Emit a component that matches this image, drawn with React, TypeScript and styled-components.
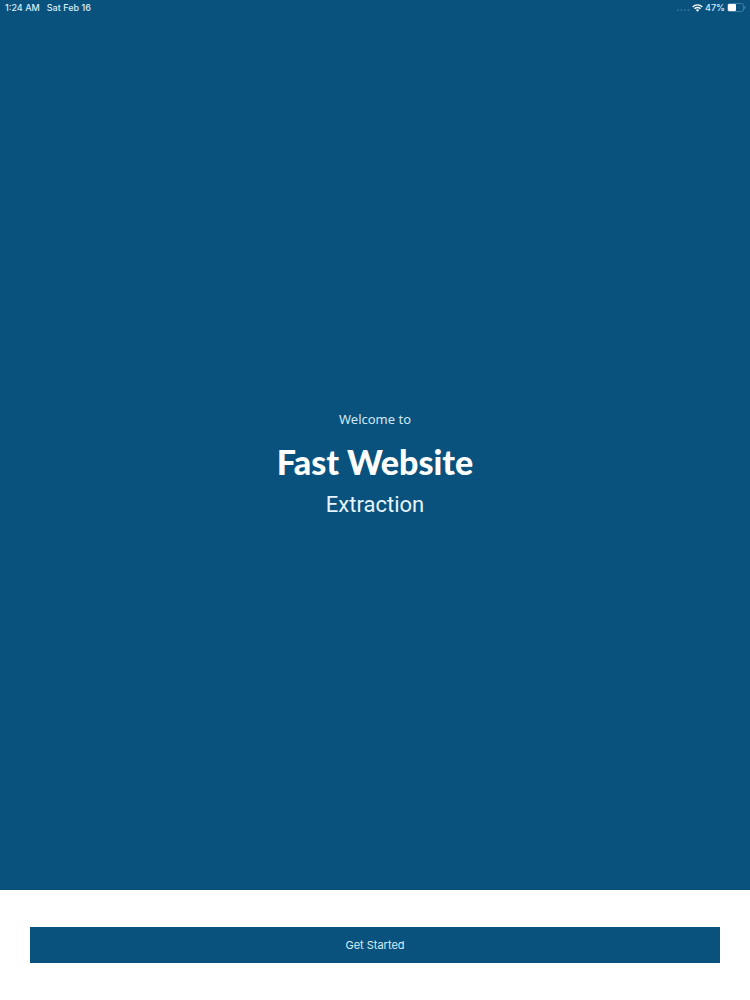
import React from "react";
import styled, { createGlobalStyle } from "styled-components";

const GlobalStyle = createGlobalStyle`
  *, *::before, *::after { box-sizing: border-box; }
  body { margin: 0; background: #ffffff; font-family: Inter, "Liberation Sans", sans-serif; }
`;

const Screen = styled.div`
  display: flex;
  flex-direction: column;
  min-height: 100vh;
`;

const Hero = styled.main`
  flex: 1;
  display: flex;
  flex-direction: column;
  background: #0a527e;
  color: #ffffff;
`;

const StatusBar = styled.header`
  display: flex;
  justify-content: space-between;
  align-items: center;
  height: 15px;
  padding: 0 4px 0 5px;
  font-size: 9px;
  line-height: 15px;
  font-weight: 500;
  color: #d9edf7;
`;

const StatusGroup = styled.div<{ $gap: number }>`
  display: flex;
  align-items: center;
  gap: ${({ $gap }) => $gap}px;
`;

const Welcome = styled.div`
  flex: 1;
  display: flex;
  flex-direction: column;
  align-items: center;
  justify-content: center;
  padding-top: 22px;
  text-align: center;
`;

const Greeting = styled.p`
  margin: 0;
  font-family: "Noto Sans", sans-serif;
  font-size: 13px;
  line-height: 20px;
  color: #cfe8f3;
`;

const Title = styled.h1`
  margin: 8px 0 4px;
  font-family: "Marker Felt", Lato, sans-serif;
  font-size: 34px;
  line-height: 50px;
  font-weight: 900;
`;

const Subtitle = styled.p`
  margin: 0;
  font-family: Roboto, sans-serif;
  font-size: 22px;
  line-height: 28px;
  color: #e6f4fb;
`;

const Footer = styled.footer`
  padding: 37px 30px;
`;

const StartButton = styled.button`
  display: block;
  width: 100%;
  height: 36px;
  padding: 0;
  border: 0;
  border-radius: 0;
  background: #0a527e;
  color: #d9edf7;
  font-family: inherit;
  font-size: 11px;
  line-height: 16px;
  cursor: pointer;
`;

const SignalDots = () => (
  <svg width="14" height="8" viewBox="0 0 14 8" fill="#5088aa" aria-hidden="true">
    {[1, 4.5, 8, 11.5].map((x) => (
      <rect key={x} x={x} y="5.5" width="2" height="1" rx="0.5" />
    ))}
  </svg>
);

const WifiIcon = () => (
  <svg width="11" height="8" viewBox="0 0 11 8" fill="none" stroke="#ffffff" strokeWidth="1.4" aria-hidden="true">
    <path d="M0.7 3C3.4 0.1 7.6 0.1 10.3 3" />
    <path d="M2.5 4.8C4.2 3.1 6.8 3.1 8.5 4.8" />
    <path d="M5.5 7.7L3.8 6C4.8 5.1 6.2 5.1 7.2 6Z" fill="#ffffff" stroke="none" />
  </svg>
);

const BatteryIcon = () => (
  <svg width="19" height="9" viewBox="0 0 19 9" fill="none" aria-hidden="true">
    <rect x="0.5" y="0.5" width="16" height="8" rx="2" stroke="#3f7fa4" />
    <rect x="1" y="1" width="8" height="7" rx="1" fill="#ffffff" />
    <path d="M17.5 3C18.8 3.5 18.8 5.5 17.5 6Z" fill="#5d96b6" />
  </svg>
);

export default function App() {
  return (
    <Screen>
      <GlobalStyle />
      <Hero>
        <StatusBar>
          <StatusGroup $gap={7}>
            <span>1:24 AM</span>
            <span>Sat Feb 16</span>
          </StatusGroup>
          <StatusGroup $gap={2}>
            <SignalDots />
            <WifiIcon />
            <span>47%</span>
            <BatteryIcon />
          </StatusGroup>
        </StatusBar>
        <Welcome>
          <Greeting>Welcome to</Greeting>
          <Title>Fast Website</Title>
          <Subtitle>Extraction</Subtitle>
        </Welcome>
      </Hero>
      <Footer>
        <StartButton type="button">Get Started</StartButton>
      </Footer>
    </Screen>
  );
}
